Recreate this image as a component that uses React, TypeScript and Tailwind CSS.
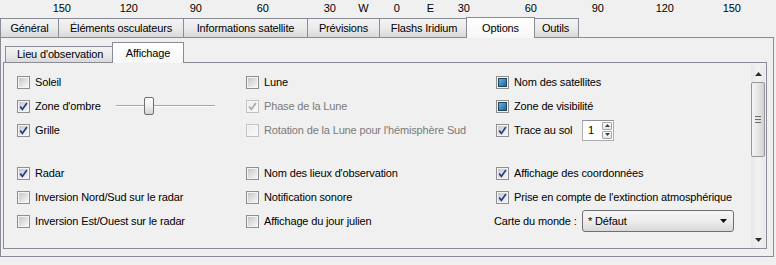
import type { ReactNode } from "react";

type CheckState = "off" | "on" | "partial";

function CheckBox({ state = "off", disabled = false }: { state?: CheckState; disabled?: boolean }) {
  return (
    <span
      className={`relative flex h-[13px] w-[13px] shrink-0 border p-[1px] ${
        disabled ? "border-[#c2c2c2] bg-[#f7f7f7]" : "border-[#8e8f8f] bg-[#f4f4f4]"
      }`}
    >
      {state === "partial" ? (
        <span className="flex-1 border border-[#23425e] bg-linear-to-br from-[#62b4e6] to-[#1a66a0]" />
      ) : (
        <span
          className={`flex-1 bg-linear-to-br ${
            disabled ? "from-[#ececec] to-[#f9f9f9]" : "from-[#c3c7cd] to-[#f7f7f7]"
          }`}
        />
      )}
      {state === "on" && (
        <svg className="absolute left-0 top-0" width="11" height="11" viewBox="0 0 11 11">
          <path
            d="M2.2 5.6 L4.4 8.4 L8.9 1.9"
            fill="none"
            stroke={disabled ? "#a9a9a9" : "#2a3b80"}
            strokeWidth="1.7"
          />
        </svg>
      )}
    </span>
  );
}

function Option({
  label,
  state,
  disabled,
  width,
  children,
}: {
  label: string;
  state?: CheckState;
  disabled?: boolean;
  width?: string;
  children?: ReactNode;
}) {
  return (
    <div className="flex h-[24px] items-center">
      <div className={`flex items-center ${width ?? ""}`}>
        <CheckBox state={state} disabled={disabled} />
        <span className={`ml-[5px] whitespace-nowrap ${disabled ? "text-[#7a7a7a]" : ""}`}>{label}</span>
      </div>
      {children}
    </div>
  );
}

function Slider() {
  return (
    <div className="relative flex h-[18px] w-[99px] items-center">
      <div className="absolute left-0 right-0 top-[8px] h-[2px] border-t border-[#a6a6a6] bg-white" />
      <div className="relative ml-[28px] h-[18px] w-[10px] rounded-[2px] border border-[#6f6f6f] bg-linear-to-b from-white via-[#f0f0f0] to-[#d3d3d3]" />
    </div>
  );
}

function SpinBox() {
  return (
    <div className="flex h-[21px] w-[32px] border border-[#abadb3] border-t-[#8e9196] bg-white">
      <span className="flex-1 pl-[5px] leading-[19px]">1</span>
      <div className="flex w-[12px] flex-col gap-px p-px">
        <div className="flex flex-1 items-center justify-center rounded-[1px] border border-[#a5a5a5] bg-linear-to-b from-white to-[#e6e6e6]">
          <svg width="5" height="3" viewBox="0 0 5 3">
            <path d="M0 3 L2.5 0 L5 3 Z" fill="#3c3c3c" />
          </svg>
        </div>
        <div className="flex flex-1 items-center justify-center rounded-[1px] border border-[#a5a5a5] bg-linear-to-b from-white to-[#e6e6e6]">
          <svg width="5" height="3" viewBox="0 0 5 3">
            <path d="M0 0 L2.5 3 L5 0 Z" fill="#3c3c3c" />
          </svg>
        </div>
      </div>
    </div>
  );
}

function ComboBox() {
  return (
    <div className="flex h-[22px] w-[152px] items-center rounded-[3px] border border-[#707070] bg-linear-to-b from-[#f6f6f6] via-[#ededed] to-[#d8d8d8] pl-[5px] pr-[6px]">
      <span className="flex-1">* Défaut</span>
      <svg width="7" height="4" viewBox="0 0 7 4">
        <path d="M0 0 L3.5 4 L7 0 Z" fill="#111" />
      </svg>
    </div>
  );
}

function Tab({ label, width, selected, small }: { label: string; width: string; selected?: boolean; small?: boolean }) {
  if (selected) {
    return (
      <div
        className={`relative z-10 -mb-px ml-[-3px] flex h-[21px] ${width} items-start justify-center border border-b-0 border-[#898c95] bg-linear-to-b from-white to-[#f7f7f7] pt-[2px]`}
      >
        {label}
      </div>
    );
  }
  return (
    <div
      className={`flex ${small ? "h-[16px]" : "h-[19px]"} ${width} items-center justify-center border border-b-0 border-[#898c95] bg-linear-to-b from-[#f3f3f3] via-[#ebebeb] to-[#d9d9d9]`}
    >
      {label}
    </div>
  );
}

const ruler = ["150", "", "120", "", "90", "", "60", "", "30", "W", "0", "E", "30", "", "60", "", "90", "", "120", "", "150"];

export default function App() {
  return (
    <div className="h-[265px] w-[776px] overflow-hidden bg-[#f0f0f0] font-['Liberation_Sans',Arial,sans-serif] text-[11px] tracking-[-0.15px] text-black">
      {/* Ruler */}
      <div className="flex h-[16px] items-center pl-[45px]">
        {ruler.map((r, i) => (
          <span key={i} className="w-[33.5px] shrink-0 text-center leading-[16px]">
            {r}
          </span>
        ))}
      </div>

      {/* Main tabs */}
      <div className="flex h-[21px] items-end">
        <Tab label="Général" width="w-[59px]" />
        <div className="-ml-px flex items-end">
          <Tab label="Éléments osculateurs" width="w-[126px]" />
        </div>
        <div className="-ml-px flex items-end">
          <Tab label="Informations satellite" width="w-[125px]" />
        </div>
        <div className="-ml-px flex items-end">
          <Tab label="Prévisions" width="w-[73px]" />
        </div>
        <div className="-ml-px flex items-end">
          <Tab label="Flashs Iridium" width="w-[90px]" />
        </div>
        <Tab label="Options" width="w-[69px]" selected />
        <div className="ml-[-3px] flex items-end">
          <Tab label="Outils" width="w-[47px]" />
        </div>
      </div>

      {/* Options panel */}
      <div className="h-[220px] w-[774px] border border-[#898c95] bg-[#f0f0f0] pt-[3px]">
        <div className="ml-[4px] flex h-[21px] items-end">
          <Tab label="Lieu d'observation" width="w-[110px]" small />
          <Tab label="Affichage" width="w-[72px]" selected small />
        </div>

        <div className="ml-[2px] flex h-[187px] w-[764px] border border-[#898c95] bg-[#f0f0f0]">
          <div className="flex-1 pl-[13px] pt-[7px]">
            <div className="grid grid-cols-[229px_250px_1fr]">
              <Option label="Soleil" />
              <Option label="Lune" />
              <Option label="Nom des satellites" state="partial" />

              <Option label="Zone d'ombre" state="on" width="w-[99px]">
                <Slider />
              </Option>
              <Option label="Phase de la Lune" state="on" disabled />
              <Option label="Zone de visibilité" state="partial" />

              <Option label="Grille" state="on" />
              <Option label="Rotation de la Lune pour l'hémisphère Sud" disabled />
              <Option label="Trace au sol" state="on" width="w-[86px]">
                <SpinBox />
              </Option>
            </div>

            <div className="mt-[19px] grid grid-cols-[229px_250px_1fr]">
              <Option label="Radar" state="on" />
              <Option label="Nom des lieux d'observation" />
              <Option label="Affichage des coordonnées" state="on" />

              <Option label="Inversion Nord/Sud sur le radar" />
              <Option label="Notification sonore" />
              <Option label="Prise en compte de l'extinction atmosphérique" state="on" />

              <Option label="Inversion Est/Ouest sur le radar" />
              <Option label="Affichage du jour julien" />
              <div className="-ml-[2px] flex h-[24px] items-center">
                <span className="w-[88px] whitespace-nowrap">Carte du monde :</span>
                <ComboBox />
              </div>
            </div>
          </div>

          {/* Scrollbar */}
          <div className="mr-px mt-[2px] flex w-[14px] flex-col bg-linear-to-r from-[#e6e6e6] via-[#f2f2f2] to-[#e8e8e8]">
            <div className="flex h-[17px] items-center justify-center">
              <svg width="7" height="4" viewBox="0 0 7 4">
                <path d="M0 4 L3.5 0 L7 4 Z" fill="#2c2c2c" />
              </svg>
            </div>
            <div className="flex h-[75px] items-center justify-center rounded-[2px] border border-[#979797] bg-linear-to-r from-[#f4f4f4] via-[#e6e6e6] to-[#d2d2d2]">
              <div className="flex flex-col gap-[2px]">
                <div className="h-px w-[6px] bg-[#6b6b6b]" />
                <div className="h-px w-[6px] bg-[#6b6b6b]" />
                <div className="h-px w-[6px] bg-[#6b6b6b]" />
              </div>
            </div>
            <div className="flex-1" />
            <div className="flex h-[17px] items-center justify-center">
              <svg width="7" height="4" viewBox="0 0 7 4">
                <path d="M0 0 L3.5 4 L7 0 Z" fill="#2c2c2c" />
              </svg>
            </div>
          </div>
        </div>
      </div>
    </div>
  );
}
